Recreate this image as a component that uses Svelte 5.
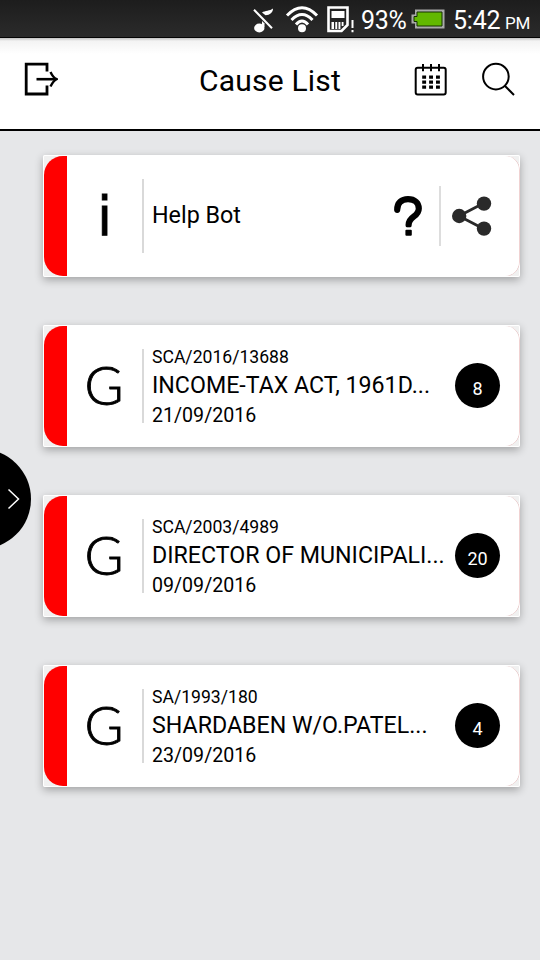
<script lang="ts">
  type Cause = { id: string; caseNo: string; title: string; date: string; count: number };

  const causes: Cause[] = [
    { id: 'income', caseNo: 'SCA/2016/13688', title: 'INCOME-TAX ACT, 1961D...', date: '21/09/2016', count: 8 },
    { id: 'director', caseNo: 'SCA/2003/4989', title: 'DIRECTOR OF MUNICIPALI...', date: '09/09/2016', count: 20 },
    { id: 'shardaben', caseNo: 'SA/1993/180', title: 'SHARDABEN W/O.PATEL...', date: '23/09/2016', count: 4 }
  ];
</script>

<div class="screen">
  <div class="status-bar">
    <svg class="muted" width="20" height="26" viewBox="0 0 20 26">
      <ellipse cx="6.3" cy="21" rx="5.2" ry="4.4" fill="#fff" />
      <path d="M9 20V14L11.5 16.5V20Z" fill="#fff" />
      <path d="M9 5.5C12 3.5 17 4 20 1.5C20 5.5 17 8 12.5 8.2Z" fill="#fff" />
      <path d="M1 2.8L19 21.3" stroke="#fff" stroke-width="2" />
    </svg>
    <svg class="wifi" width="34" height="28" viewBox="0 0 34 28" fill="none" stroke="#fff">
      <path d="M2 10.5Q17 -5 32 10.5" stroke-width="3" />
      <path d="M6.5 15Q17 4 27.5 15" stroke-width="3" />
      <path d="M11 19.5Q17 12.5 23 19.5" stroke-width="3" />
      <circle cx="17" cy="23.3" r="4" fill="#fff" stroke="none" />
    </svg>
    <svg class="sim" width="28" height="28" viewBox="0 0 28 28">
      <path d="M1.5 1.5H20.5V19L14.5 25H1.5Z" fill="none" stroke="#fff" stroke-width="2.6" />
      <path d="M4.5 5H17.5V12H4.5ZM4.5 16H7V23H4.5ZM8.3 16H10.2V23H8.3ZM11.5 16H13.4V23H11.5ZM14.7 16H16.5V20H14.7Z" fill="#fff" />
      <path d="M24.5 14H26.5V22H24.5ZM24.5 24H26.5V26.2H24.5Z" fill="#fff" />
    </svg>
    <span class="percent">93%</span>
    <svg class="battery" width="34" height="20" viewBox="0 0 34 20">
      <path d="M4 .5H33.5V19.5H4V14.5H.5V5.5H4Z" fill="#a9aaa9" />
      <path d="M6 3H31V17H6V12.5H3V7.5H6Z" fill="#62b800" stroke="#153000" stroke-width="1" />
    </svg>
    <span class="clock">5:42</span>
    <span class="meridiem">PM</span>
  </div>

  <header>
    <svg class="exit" width="34" height="34" viewBox="0 0 34 34" fill="none" stroke="#000">
      <path d="M23 9.5V2.2H2.2V32H23V23.5" stroke-width="2.8" />
      <path d="M12.5 17.2H32" stroke-width="2.6" />
      <path d="M26.5 10Q29 15.5 32.5 17.2Q29 19 26.5 24.5" stroke-width="2.4" />
    </svg>
    <h1>Cause List</h1>
    <svg class="calendar" width="34" height="34" viewBox="0 0 34 34" fill="none" stroke="#000">
      <rect x="1.7" y="5.8" width="30" height="26.7" rx="2" stroke-width="2" />
      <path d="M9 2V9.3M17 2V9.3M25 2V9.3" stroke-width="2" />
      <path d="M8.2 15.2H26M8.2 20.2H26M8.2 25.2H26" stroke-width="3.2" stroke-dasharray="3.9 3" />
    </svg>
    <svg class="search" width="34" height="34" viewBox="0 0 34 34" fill="none" stroke="#000" stroke-width="2">
      <circle cx="13.9" cy="14.6" r="12.8" />
      <path d="M22.8 23.8L32 33" />
    </svg>
  </header>

  <main>
    <section class="card">
      <div class="card-inner">
        <div class="initial info">i</div>
        <div class="details">
          <div class="help">Help Bot</div>
        </div>
        <svg class="question" width="32" height="42" viewBox="0 0 32 42">
          <path d="M5.2 14.8C5.2 7.8 9.5 4.2 16 4.2C22.8 4.2 26.8 8 26.8 13.5C26.8 22.5 16.6 20.5 16.6 30" fill="none" stroke="#000" stroke-width="6.2" stroke-linecap="round" stroke-linejoin="round" />
          <path d="M13 32.3H20.5V34.3H13Z" fill="#fff" />
          <rect x="13.4" y="34.8" width="6.4" height="6" rx="1" fill="#000" />
        </svg>
        <svg class="share" width="42" height="42" viewBox="0 0 42 42" fill="#2a2a2a">
          <path d="M32 8.6L8 21L32 33.6" fill="none" stroke="#2a2a2a" stroke-width="2.8" />
          <circle cx="8.2" cy="21" r="7.2" />
          <circle cx="33" cy="8.6" r="7.2" />
          <circle cx="33" cy="33.6" r="7.2" />
        </svg>
      </div>
    </section>

    {#each causes as cause (cause.id)}
      <section class="card">
        <div class="card-inner">
          <div class="initial">G</div>
          <div class="details">
            <div class="case-no">{cause.caseNo}</div>
            <div class="title">{cause.title}</div>
            <div class="date">{cause.date}</div>
          </div>
          <div class="count">{cause.count}</div>
        </div>
      </section>
    {/each}
  </main>

  <div class="drawer-handle">
    <svg width="14" height="22" viewBox="0 0 14 22">
      <path d="M1.5 1.5L11.5 11L1.5 20.5" fill="none" stroke="#fff" stroke-width="1.5" />
    </svg>
  </div>
</div>

<style>
  :global(body) {
    background: #e6e7e9;
  }

  .screen {
    position: relative;
    height: 960px;
    overflow: hidden;
    background: #e6e7e9;
    font-family: Roboto, sans-serif;
    color: #000;
  }

  svg {
    display: block;
    flex: none;
  }

  /* Status bar */
  .status-bar {
    box-sizing: border-box;
    height: 38px;
    display: flex;
    align-items: center;
    padding-left: 253px;
    background: linear-gradient(#1d1d1d, #2b2b2b);
    border-bottom: 1px solid #050505;
    color: #fff;
    white-space: nowrap;
  }

  .muted {
    margin-top: 3px;
  }

  .wifi {
    margin-left: 12px;
  }

  .sim {
    margin: 3px 0 0 8px;
  }

  .percent {
    width: 50px;
    margin-left: 6px;
    font-size: 25px;
    line-height: 38px;
    margin-top: 4px;
    letter-spacing: -0.3px;
  }

  .battery {
    margin-top: 1px;
  }

  .clock {
    width: 52px;
    margin-left: 8px;
    font-size: 25px;
    line-height: 38px;
    margin-top: 4px;
    letter-spacing: -0.2px;
  }

  .meridiem {
    font-size: 17px;
    margin-top: 8px;
    letter-spacing: -0.2px;
  }

  /* Header */
  header {
    box-sizing: border-box;
    height: 93px;
    display: flex;
    align-items: center;
    padding: 0 24px 10px 24px;
    background: linear-gradient(#c2c2c2, #f3f3f3 3px, #fff 16px);
    border-bottom: 2px solid #000;
  }

  h1 {
    width: 215px;
    margin: 5px 0 0 141px;
    font-size: 30px;
    font-weight: 400;
    letter-spacing: 0.2px;
    line-height: 40px;
    white-space: nowrap;
  }

  .search {
    margin-left: 34px;
  }

  /* Cards */
  main {
    display: flex;
    flex-direction: column;
    gap: 48px;
    padding: 24px 20px 0 43px;
  }

  .card {
    box-sizing: border-box;
    height: 122px;
    padding: 1px;
    background: #f1f1f1;
    border-radius: 2px;
    box-shadow: 0 3px 8px rgba(0, 0, 0, 0.3), inset 0 0 0 1px #fff;
  }

  .card-inner {
    box-sizing: border-box;
    height: 120px;
    display: flex;
    align-items: center;
    background: linear-gradient(to right, #f00 23px, #fff 23px);
    border-radius: 19px 14px 14px 19px;
    box-shadow: 0.5px 0 0 #e2a5a5;
    padding-left: 23px;
  }

  .initial {
    width: 75px;
    height: 74px;
    border-right: 2px solid #d9d9d9;
    font-family: Lato, sans-serif;
    font-size: 53px;
    font-weight: 300;
    line-height: 72px;
    text-align: center;
    text-indent: -1px;
    -webkit-text-stroke: 0.9px #000;
  }

  .info {
    font-family: 'DejaVu Sans', sans-serif;
    font-size: 53px;
    font-weight: 400;
    line-height: 76px;
    text-indent: 0;
    -webkit-text-stroke: 0.9px #000;
  }

  .details {
    width: 303px;
    margin-left: 8px;
    padding-top: 2px;
    white-space: nowrap;
  }

  .help {
    margin-top: -4px;
    font-size: 23.3px;
    line-height: 30px;
  }

  .case-no {
    font-size: 17.6px;
    line-height: 26px;
  }

  .title {
    padding-bottom: 1px;
    font-size: 23.2px;
    line-height: 30px;
  }

  .date {
    font-size: 19.6px;
    line-height: 29px;
  }

  .count {
    width: 45px;
    height: 45px;
    margin-bottom: 2px;
    border-radius: 50%;
    background: #000;
    color: #fff;
    font-size: 18px;
    line-height: 51px;
    text-align: center;
  }

  .card:first-child .details {
    width: 240px;
  }

  .question {
    box-sizing: content-box;
    height: 42px;
    padding: 9px 15px 9px 0;
    border-right: 2px solid #ddd;
  }

  .share {
    margin-left: 10px;
  }

  /* Drawer handle */
  .drawer-handle {
    position: absolute;
    left: -69px;
    top: 449px;
    width: 100px;
    height: 100px;
    box-sizing: border-box;
    display: flex;
    align-items: center;
    justify-content: flex-end;
    padding-right: 10px;
    border-radius: 50%;
    background: #000;
  }
</style>
